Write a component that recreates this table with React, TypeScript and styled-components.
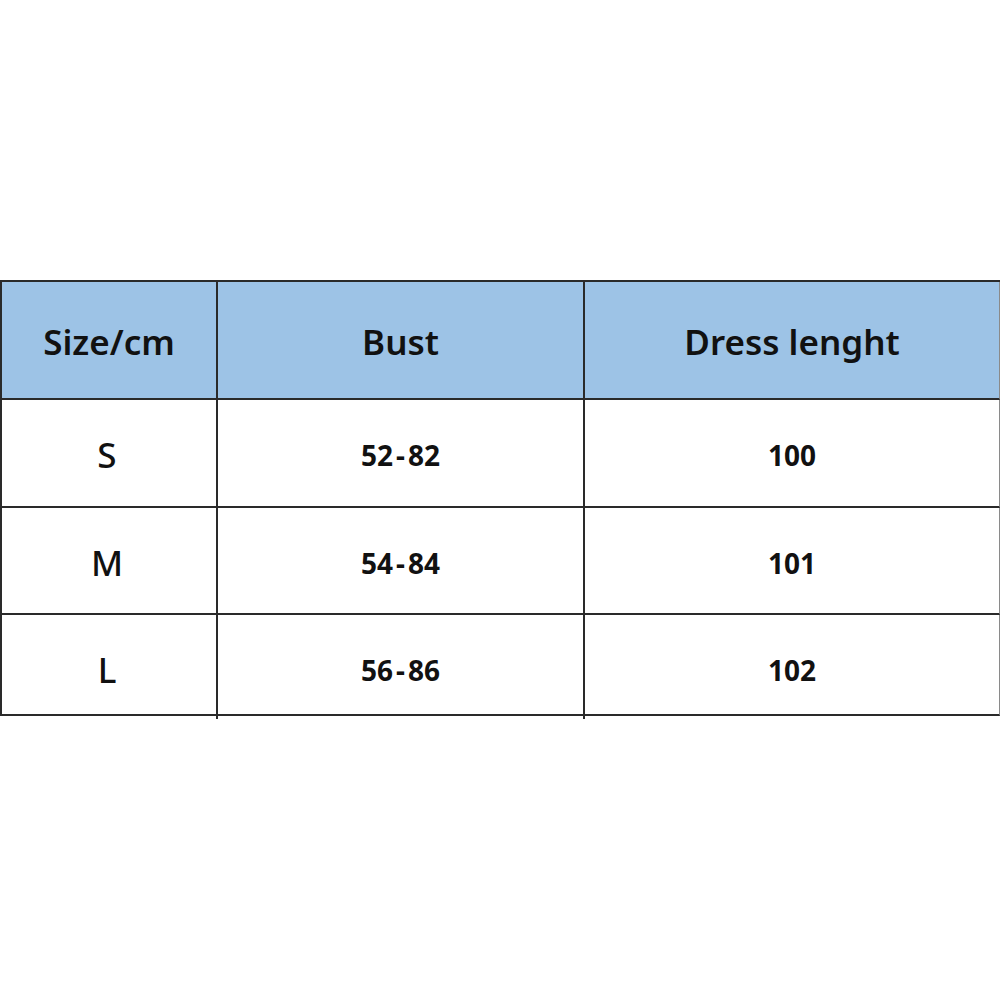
import React from "react";
import styled, { createGlobalStyle } from "styled-components";

const Global = createGlobalStyle`
  html, body { margin: 0; padding: 0; background: #ffffff; }
  body { font-family: "Noto Sans", "Liberation Sans", sans-serif; color: #111; }
`;

const Page = styled.div`
  width: 1000px;
  height: 1000px;
  padding-top: 280px;
  box-sizing: border-box;
`;

const Table = styled.div`
  display: grid;
  grid-template-columns: 218px 367px 415px;
  grid-template-rows: 118px 108px 107px 101px 3px;
  border-top: 2px solid #2a2a2a;
  box-sizing: border-box;
`;

const Cell = styled.div<{ $first?: boolean; $last?: boolean }>`
  display: flex;
  align-items: flex-start;
  justify-content: center;
  box-sizing: border-box;
  background: #ffffff;
  border-bottom: 2px solid #2a2a2a;
  border-left: ${(p) => (p.$first ? "2px solid #2a2a2a" : "none")};
  border-right: ${(p) => (p.$last ? "1px solid #8a8a8a" : "2px solid #2a2a2a")};
  font-family: "Noto Sans", "Liberation Sans", sans-serif;
  font-size: 28px;
  line-height: 40px;
  font-weight: 700;
  color: #111;
  padding-top: 35px;
`;

const HeadCell = styled(Cell)`
  align-items: center;
  padding-top: 4px;
  background: #9dc3e6;
  font-size: 35px;
  font-weight: 600;
`;

const SizeCell = styled(Cell)`
  font-size: 35px;
  font-weight: 500;
  padding-right: 4px;
`;

const Dash = styled.span`
  margin: 0 3px;
`;

const Tail = styled.div<{ $line?: boolean }>`
  border-right: ${(p) => (p.$line ? "2px solid #2a2a2a" : "none")};
  box-sizing: border-box;
`;

const rows = [
  { s: "S", b: ["52", "82"], l: "100" },
  { s: "M", b: ["54", "84"], l: "101" },
  { s: "L", b: ["56", "86"], l: "102" },
];

export default function App() {
  return (
    <>
      <Global />
      <Page>
        <Table>
          <HeadCell $first>Size/cm</HeadCell>
          <HeadCell>Bust</HeadCell>
          <HeadCell $last>Dress lenght</HeadCell>
          {rows.map((r) => (
            <React.Fragment key={r.s}>
              <SizeCell $first>{r.s}</SizeCell>
              <Cell>
                {r.b[0]}
                <Dash>-</Dash>
                {r.b[1]}
              </Cell>
              <Cell $last>{r.l}</Cell>
            </React.Fragment>
          ))}
          <Tail $line />
          <Tail $line />
          <Tail />
        </Table>
      </Page>
    </>
  );
}
